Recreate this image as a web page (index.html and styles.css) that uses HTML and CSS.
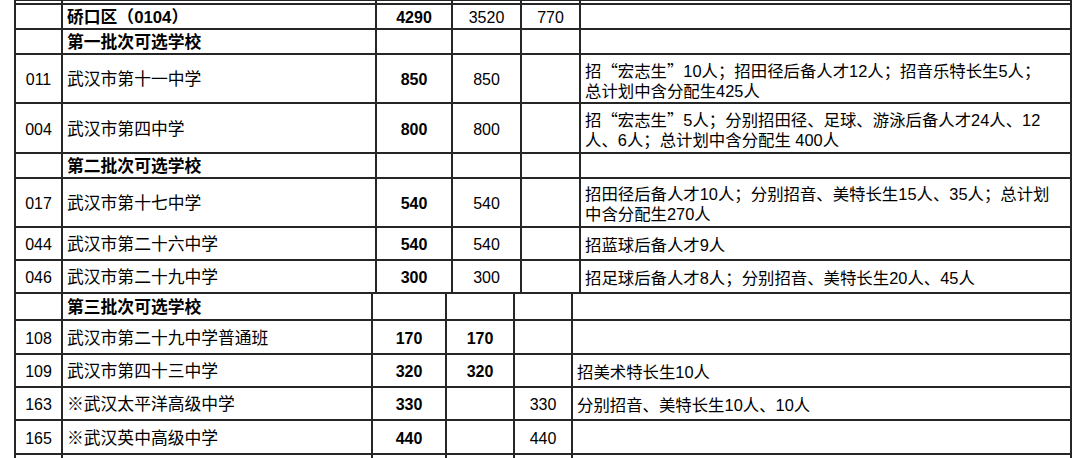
FILE: index.html
```html
<!DOCTYPE html>
<html lang="zh-CN">
<head>
<meta charset="utf-8">
<title>硚口区招生计划</title>
<link rel="stylesheet" href="styles.css">
</head>
<body>
<div class="page">
  <table class="t upper">
    <colgroup>
      <col class="u1"><col class="u2"><col class="u3"><col class="u4"><col class="u5"><col class="u6">
    </colgroup>
    <tr class="r4"><td></td><td></td><td></td><td></td><td></td><td></td></tr>
    <tr class="r25"><td></td><td class="name b">硚口区（0104）</td><td class="num b">4290</td><td class="num">3520</td><td class="num">770</td><td></td></tr>
    <tr class="r25"><td></td><td class="name b">第一批次可选学校</td><td></td><td></td><td></td><td></td></tr>
    <tr class="r49"><td class="code">011</td><td class="name">武汉市第十一中学</td><td class="num b">850</td><td class="num">850</td><td></td><td class="note">招<span class="qo">“</span>宏志生<span class="qc">”</span>10人；招田径后备人才12人；招音乐特长生5人；<br>总计划中含分配生425人</td></tr>
    <tr class="r50"><td class="code">004</td><td class="name">武汉市第四中学</td><td class="num b">800</td><td class="num">800</td><td></td><td class="note">招<span class="qo">“</span>宏志生<span class="qc">”</span>5人；分别招田径、足球、游泳后备人才24人、12<br>人、6人；总计划中含分配生 400人</td></tr>
    <tr class="r25"><td></td><td class="name b">第二批次可选学校</td><td></td><td></td><td></td><td></td></tr>
    <tr class="r49"><td class="code">017</td><td class="name">武汉市第十七中学</td><td class="num b">540</td><td class="num">540</td><td></td><td class="note">招田径后备人才10人；分别招音、美特长生15人、35人；总计划<br>中含分配生270人</td></tr>
    <tr class="r33"><td class="code">044</td><td class="name">武汉市第二十六中学</td><td class="num b">540</td><td class="num">540</td><td></td><td class="note">招蓝球后备人才9人</td></tr>
    <tr class="r33"><td class="code">046</td><td class="name">武汉市第二十九中学</td><td class="num b">300</td><td class="num">300</td><td></td><td class="note">招足球后备人才8人；分别招音、美特长生20人、45人</td></tr>
  </table>
  <table class="t lower">
    <colgroup>
      <col class="l1"><col class="l2"><col class="l3"><col class="l4"><col class="l5"><col class="l6">
    </colgroup>
    <tr class="r26"><td></td><td class="name b">第三批次可选学校</td><td></td><td></td><td></td><td></td></tr>
    <tr class="r34"><td class="code">108</td><td class="name">武汉市第二十九中学普通班</td><td class="num b">170</td><td class="num b">170</td><td></td><td class="note"></td></tr>
    <tr class="r33"><td class="code">109</td><td class="name">武汉市第四十三中学</td><td class="num b">320</td><td class="num b">320</td><td></td><td class="note">招美术特长生10人</td></tr>
    <tr class="r33"><td class="code">163</td><td class="name">※武汉太平洋高级中学</td><td class="num b">330</td><td></td><td class="num">330</td><td class="note">分别招音、美特长生10人、10人</td></tr>
    <tr class="r34"><td class="code">165</td><td class="name">※武汉英中高级中学</td><td class="num b">440</td><td></td><td class="num">440</td><td class="note"></td></tr>
    <tr class="r30"><td></td><td></td><td></td><td></td><td></td><td></td></tr>
  </table>
</div>
</body>
</html>
```

FILE: styles.css
```css
html, body {
  margin: 0;
  padding: 0;
  background: #ffffff;
  width: 1080px;
  height: 458px;
  overflow: hidden;
}

.page {
  padding-left: 14px;
  margin-top: -1px;
  font-family: "Liberation Sans", "Noto Sans CJK SC", sans-serif;
  color: #000000;
}

.t {
  border-collapse: collapse;
  table-layout: fixed;
  width: 1056px;
}

.t td {
  border: 2px solid #262626;
  padding: 3px 0 0 0;
  vertical-align: middle;
  white-space: nowrap;
  overflow: hidden;
}

.lower tr:first-child td {
  border-top: none;
}

.u1 { width: 47px; }
.u2 { width: 314px; }
.u3 { width: 76px; }
.u4 { width: 69px; }
.u5 { width: 59px; }
.u6 { width: 491px; }

.l1 { width: 47px; }
.l2 { width: 310px; }
.l3 { width: 74px; }
.l4 { width: 68px; }
.l5 { width: 58px; }
.l6 { width: 499px; }

.r4 { height: 4px; }
.r4 td { padding: 0; line-height: 0; font-size: 0; }
.r25 { height: 25px; }
.r26 { height: 26px; }
.r30 { height: 30px; }
.r33 { height: 33px; }
.r34 { height: 34px; }
.r49 { height: 49px; }
.r50 { height: 50px; }

.code {
  text-align: center;
  font-size: 16px;
}

.name {
  font-size: 16.8px;
  padding-left: 4px !important;
  line-height: 20px;
}

.num {
  text-align: center;
  font-size: 16px;
}

.b {
  font-weight: bold;
}

.note {
  font-size: 16.4px;
  line-height: 20px;
  padding-left: 4px !important;
}

.qo,
.qc {
  display: inline-block;
  width: 1em;
  font-family: "Noto Sans CJK SC", sans-serif;
}

.qo {
  text-align: right;
}

.qc {
  text-align: left;
}
```
